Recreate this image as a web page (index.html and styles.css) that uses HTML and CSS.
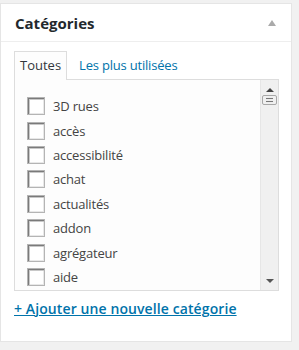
FILE: index.html
```html
<!DOCTYPE html>
<html lang="fr">
<head>
  <meta charset="UTF-8" />
  <meta name="viewport" content="width=device-width, initial-scale=1.0" />
  <title>Catégories</title>
  <link rel="stylesheet" href="styles.css">
</head>
<body>
  <div class="postbox">
    <div class="hndle">
      <h3>Catégories</h3>
      <span class="toggle"></span>
    </div>

    <div class="inside">
      <ul class="tabs">
        <li class="tab active">Toutes</li>
        <li class="tab"><a href="#">Les plus utilisées</a></li>
      </ul>

      <div class="panel">
        <ul class="checklist">
          <li><label><input type="checkbox" /> 3D rues</label></li>
          <li><label><input type="checkbox" /> accès</label></li>
          <li><label><input type="checkbox" /> accessibilité</label></li>
          <li><label><input type="checkbox" /> achat</label></li>
          <li><label><input type="checkbox" /> actualités</label></li>
          <li><label><input type="checkbox" /> addon</label></li>
          <li><label><input type="checkbox" /> agrégateur</label></li>
          <li><label><input type="checkbox" /> aide</label></li>
        </ul>

        <div class="scrollbar">
          <span class="arrow up"></span>
          <span class="thumb"></span>
          <span class="track"></span>
          <span class="arrow down"></span>
        </div>
      </div>

      <a href="#" class="add-new">+ Ajouter une nouvelle catégorie</a>
    </div>
  </div>
</body>
</html>
```

FILE: styles.css
```css
body {
  font-family: "Open Sans", Arial, sans-serif;
  background-color: #f1f1f1;
  margin: 0;
  color: #444;
  font-size: 13px;
}

.postbox {
  box-sizing: border-box;
  width: 292px;
  height: 339px;
  margin-top: 3px;
  background: #fff;
  border: 1px solid #e5e5e5;
}

.hndle {
  display: flex;
  align-items: center;
  justify-content: space-between;
  height: 37px;
  padding: 0 14px;
  border-bottom: 1px solid #eee;
}

.hndle h3 {
  margin: 0;
  font-size: 15px;
  font-weight: 700;
  color: #23282d;
}

.toggle {
  width: 0;
  height: 0;
  margin-right: 1px;
  border-left: 4px solid transparent;
  border-right: 4px solid transparent;
  border-bottom: 6px solid #aaa;
}

.inside {
  padding: 9px 13px 0;
}

.tabs {
  display: flex;
  margin: 0;
  padding: 0;
  list-style: none;
}

.tab {
  padding: 0 5px;
  line-height: 26px;
  height: 27px;
  border: 1px solid transparent;
  border-bottom: none;
  margin-right: 6px;
}

.tab.active {
  background: #fdfdfd;
  border-color: #ddd;
  color: #32373c;
  position: relative;
  margin-bottom: -1px;
  height: 28px;
}

.tab a {
  color: #0073aa;
  text-decoration: none;
  letter-spacing: -0.2px;
}

.panel {
  display: flex;
  width: 265px;
  height: 212px;
  box-sizing: border-box;
  border: 1px solid #ddd;
  background: #fdfdfd;
}

.checklist {
  flex: 1;
  margin: 0;
  padding: 14px 0 0 12px;
  list-style: none;
  overflow: hidden;
}

.checklist li {
  height: 24.4px;
  display: flex;
  align-items: center;
}

.checklist label {
  display: flex;
  align-items: center;
  color: #444;
  letter-spacing: -0.2px;
}

.checklist input {
  appearance: none;
  width: 18px;
  height: 18px;
  margin: 0 8px 0 0;
  border: 1px solid #b4b4b4;
  background: #fff;
  box-shadow: inset 1px 1px 0 #7a7a7a, inset 2px 2px 0 #c8c8c8, inset -1px -1px 0 #e8e8e8;
}

.scrollbar {
  width: 17px;
  display: flex;
  flex-direction: column;
  align-items: center;
  background: #f0f0f0;
  border-left: 1px solid #e6e6e6;
}

.arrow {
  width: 0;
  height: 0;
  border-left: 4px solid transparent;
  border-right: 4px solid transparent;
}

.arrow.up {
  margin-top: 8px;
  border-bottom: 4px solid #444;
}

.arrow.down {
  margin-bottom: 7px;
  border-top: 4px solid #555;
}

.thumb {
  box-sizing: border-box;
  width: 15px;
  height: 10px;
  margin-top: 3px;
  border: 1px solid #a8a8a8;
  border-radius: 2px;
  background: repeating-linear-gradient(#ececec 0 2px, #777 2px 3px);
  background-clip: content-box;
  padding: 1px 3px;
}

.track {
  flex: 1;
}

.add-new {
  display: inline-block;
  margin-top: 8px;
  font-size: 14px;
  font-weight: 600;
  letter-spacing: 0.1px;
  color: #0073aa;
  text-decoration: underline;
  line-height: 19px;
}
```
